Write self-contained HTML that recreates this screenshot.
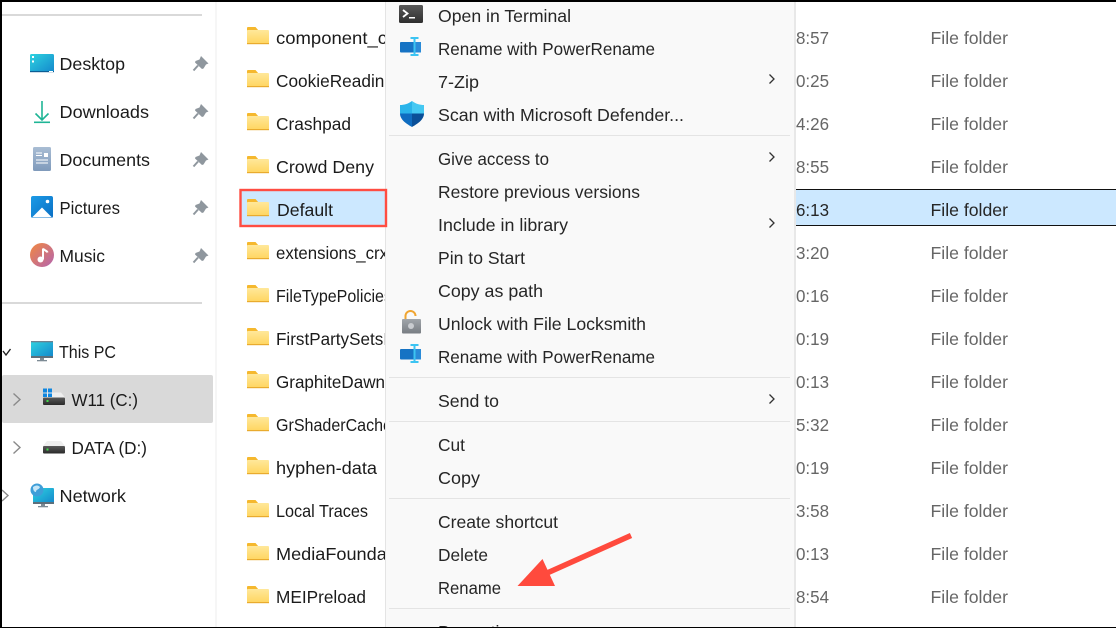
<!DOCTYPE html>
<html><head><meta charset="utf-8"><title>Explorer</title>
<style>
html,body{margin:0;padding:0;background:#fff;width:1116px;height:628px;overflow:hidden}
svg{display:block}
text{font-family:"Liberation Sans",sans-serif;font-size:17.5px}
.n{fill:#1b1b1b}.g{fill:#666}.m{fill:#262626}
</style></head><body>
<svg width="1116" height="628" viewBox="0 0 1116 628" xmlns="http://www.w3.org/2000/svg">
<defs>
<linearGradient id="fg" x1="0" y1="0" x2="0" y2="1"><stop offset="0" stop-color="#ffe89a"/><stop offset="1" stop-color="#ffd55f"/></linearGradient>
<linearGradient id="dk" x1="0" y1="0" x2="1" y2="1"><stop offset="0" stop-color="#2ed3e0"/><stop offset="1" stop-color="#1488cc"/></linearGradient>
<linearGradient id="doc" x1="0" y1="0" x2="0" y2="1"><stop offset="0" stop-color="#a9bdd4"/><stop offset="1" stop-color="#7f9abb"/></linearGradient>
<linearGradient id="pic" x1="0" y1="0" x2="1" y2="1"><stop offset="0" stop-color="#1c9be6"/><stop offset="1" stop-color="#0a6fc4"/></linearGradient>
<linearGradient id="mus" x1="0" y1="0" x2="1" y2="1"><stop offset="0" stop-color="#f2883f"/><stop offset="1" stop-color="#b364b0"/></linearGradient>
<linearGradient id="term" x1="0" y1="0" x2="0" y2="1"><stop offset="0" stop-color="#585858"/><stop offset="1" stop-color="#2f2f2f"/></linearGradient>
<linearGradient id="lk" x1="0" y1="0" x2="0" y2="1"><stop offset="0" stop-color="#a0a5aa"/><stop offset="1" stop-color="#787d83"/></linearGradient>
<linearGradient id="drv" x1="0" y1="0" x2="0" y2="1"><stop offset="0" stop-color="#5a5a5a"/><stop offset="1" stop-color="#2a2a2a"/></linearGradient>
<g id="folder">
<path d="M0 3a1 1 0 0 1 1-1h7.500l3 3.500H0z" fill="#f5b82e"/>
<rect x="0" y="5" width="22" height="14" rx="1" fill="url(#fg)"/>
<rect x="0" y="18" width="22" height="1.200" fill="#e9ab2e"/>
</g>
<g id="pin"><path d="M9 1 L16.500 8.500 L14 9.500 L11.500 13.500 L10 14 L3 7.500 L3.500 6 L7.500 4.500 Z" fill="#8f979e"/><path d="M6 10.500 L1.500 15.500" stroke="#8f979e" stroke-width="2"/></g>
<g id="pr"><rect x="0" y="5" width="21" height="10.500" rx="1" fill="#1673c4"/><rect x="14.500" y="5" width="6.500" height="10.500" fill="#2a8bd8"/><path d="M10.500 1h8M14.500 1v17M10.500 18h8" stroke="#3cc4f2" stroke-width="2" fill="none"/></g>
<g id="drive"><path d="M4 5.500 L18 5.500 L22 10.500 L0 10.500Z" fill="#efefef"/><rect x="0" y="10.500" width="22" height="7.500" rx="1" fill="url(#drv)"/><rect x="3.500" y="13" width="2" height="2" fill="#3fdc4a"/></g>
</defs>

<rect width="1116" height="628" fill="#fff"/>

<!-- sidebar -->
<rect x="2" y="14" width="200" height="2" fill="#d9d9d9"/>
<rect x="2" y="302" width="200" height="2" fill="#d9d9d9"/>
<rect x="215" y="0" width="2" height="628" fill="#f6f6f6"/>
<rect x="2" y="375" width="211" height="48" rx="2" fill="#d9d9d9"/>

<!-- Desktop -->
<rect x="30" y="54" width="24" height="18" rx="1.500" fill="url(#dk)"/>
<rect x="30" y="71" width="24" height="1.200" fill="#0c5e94"/>
<rect x="32" y="56" width="2" height="2" fill="#fff"/><rect x="32" y="60.500" width="2" height="2" fill="#fff"/>
<rect x="49" y="71" width="4" height="1" fill="#fff"/>
<text class="n" x="59.500" y="70" textLength="65.500" lengthAdjust="spacingAndGlyphs">Desktop</text>
<use href="#pin" x="192" y="55"/>
<!-- Downloads -->
<path d="M42 101V120M35.500 113.500L42 120L48.500 113.500" stroke="#1fb596" stroke-width="1.600" fill="none"/>
<rect x="34" y="121.500" width="16" height="1.600" fill="#1fb596"/>
<text class="n" x="59.500" y="118" textLength="89.500" lengthAdjust="spacingAndGlyphs">Downloads</text>
<use href="#pin" x="192" y="103"/>
<!-- Documents -->
<rect x="33" y="147" width="18" height="24" rx="1.500" fill="url(#doc)"/>
<path d="M36 153h6M36 155.500h6M36 160h12M36 163h12" stroke="#fff" stroke-width="1"/>
<rect x="44" y="153" width="4" height="4" fill="#fff"/>
<text class="n" x="59.500" y="166" textLength="90.500" lengthAdjust="spacingAndGlyphs">Documents</text>
<use href="#pin" x="192" y="151"/>
<!-- Pictures -->
<rect x="31" y="196" width="22" height="22" rx="2" fill="url(#pic)"/>
<path d="M32 217.500L42 207.500L52 217.500Z" fill="#fff"/>
<circle cx="47.500" cy="201.500" r="1.800" fill="#fff"/>
<text class="n" x="59.500" y="214" textLength="60.500" lengthAdjust="spacingAndGlyphs">Pictures</text>
<use href="#pin" x="192" y="199"/>
<!-- Music -->
<circle cx="42" cy="255" r="12" fill="url(#mus)"/>
<path d="M43 248.500V259.500" stroke="#fff" stroke-width="2"/><circle cx="40.500" cy="259.500" r="3" fill="#fff"/><path d="M43 248.500C44 250.500 47 250.500 47.500 252.500" stroke="#fff" stroke-width="2" fill="none"/>
<text class="n" x="59.500" y="262" textLength="45.500" lengthAdjust="spacingAndGlyphs">Music</text>
<use href="#pin" x="192" y="247"/>
<!-- This PC -->
<path d="M3 351L6 355L10.500 349" stroke="#222" stroke-width="1.400" fill="none"/>
<rect x="31" y="341" width="22" height="16" rx="1" fill="url(#dk)"/>
<rect x="31" y="341" width="22" height="1.300" fill="#6d8290"/><rect x="31" y="356" width="22" height="2" fill="#5d6f7b"/>
<rect x="40" y="358" width="4" height="2" fill="#7d8b95"/><rect x="37" y="360" width="10" height="1.300" fill="#7d8b95"/>
<text class="n" x="59" y="358" textLength="57" lengthAdjust="spacingAndGlyphs">This PC</text>
<!-- W11 -->
<path d="M13.500 393.500L20 399.500L13.500 405.500" stroke="#8a8a8a" stroke-width="1.400" fill="none"/>
<use href="#drive" x="43" y="387"/>
<path d="M43 388.500h4v4h-4zM48 388.500h4v4h-4zM43 393.500h4v3.500h-4zM48 393.500h4v3.500h-4z" fill="#0f86e0"/>
<text class="n" x="71.500" y="406" textLength="66.500" lengthAdjust="spacingAndGlyphs">W11 (C:)</text>
<!-- DATA -->
<path d="M13.500 441.500L20 447.500L13.500 453.500" stroke="#8a8a8a" stroke-width="1.400" fill="none"/>
<use href="#drive" x="43" y="435.500"/>
<text class="n" x="71.500" y="454" textLength="75.500" lengthAdjust="spacingAndGlyphs">DATA (D:)</text>
<!-- Network -->
<path d="M2 490L8 495.500L2 501" stroke="#8a8a8a" stroke-width="1.400" fill="none"/>
<rect x="33" y="488" width="21" height="15" rx="1" fill="url(#dk)"/><rect x="33" y="502" width="21" height="2" fill="#5d6f7b"/>
<rect x="41" y="504" width="4" height="2" fill="#7d8b95"/><rect x="38" y="506" width="10" height="1.300" fill="#7d8b95"/>
<circle cx="37" cy="490" r="6.500" fill="#3f9ed8"/><path d="M33 487c3-2 5-2 7 0-1 3-4 2-4 5-2 0-3-2-3-5z" fill="#c5e6f7"/>
<text class="n" x="59.500" y="502" textLength="66.500" lengthAdjust="spacingAndGlyphs">Network</text>

<!-- selected row -->
<rect x="795" y="189" width="321" height="37" fill="#cce8ff"/>
<rect x="795" y="189" width="321" height="1" fill="#111"/>
<rect x="795" y="225" width="321" height="1" fill="#111"/>
<rect x="241" y="190" width="146" height="36" fill="#cce8ff"/>

<!-- folders -->
<use href="#folder" x="247" y="25"/>
<use href="#folder" x="247" y="68"/>
<use href="#folder" x="247" y="111"/>
<use href="#folder" x="247" y="154"/>
<use href="#folder" x="247" y="197"/>
<use href="#folder" x="247" y="240"/>
<use href="#folder" x="247" y="283"/>
<use href="#folder" x="247" y="326"/>
<use href="#folder" x="247" y="369"/>
<use href="#folder" x="247" y="412"/>
<use href="#folder" x="247" y="455"/>
<use href="#folder" x="247" y="498"/>
<use href="#folder" x="247" y="541"/>
<use href="#folder" x="247" y="584"/>

<text class="n" x="276" y="44" textLength="111" lengthAdjust="spacingAndGlyphs">component_c</text>
<text class="n" x="276" y="87" textLength="118" lengthAdjust="spacingAndGlyphs">CookieReading</text>
<text class="n" x="276" y="130" textLength="75" lengthAdjust="spacingAndGlyphs">Crashpad</text>
<text class="n" x="276" y="173" textLength="98" lengthAdjust="spacingAndGlyphs">Crowd Deny</text>
<text class="n" x="277" y="216" textLength="56" lengthAdjust="spacingAndGlyphs">Default</text>
<text class="n" x="276" y="259" textLength="112" lengthAdjust="spacingAndGlyphs">extensions_crx</text>
<text class="n" x="276" y="302" textLength="116" lengthAdjust="spacingAndGlyphs">FileTypePolicies</text>
<text class="n" x="276" y="345" textLength="112" lengthAdjust="spacingAndGlyphs">FirstPartySetsI</text>
<text class="n" x="276" y="388" textLength="109" lengthAdjust="spacingAndGlyphs">GraphiteDawn</text>
<text class="n" x="276" y="431" textLength="116" lengthAdjust="spacingAndGlyphs">GrShaderCache</text>
<text class="n" x="276" y="474" textLength="101" lengthAdjust="spacingAndGlyphs">hyphen-data</text>
<text class="n" x="276" y="517" textLength="92" lengthAdjust="spacingAndGlyphs">Local Traces</text>
<text class="n" x="276" y="560" textLength="140" lengthAdjust="spacingAndGlyphs">MediaFoundation</text>
<text class="n" x="276" y="603" textLength="90" lengthAdjust="spacingAndGlyphs">MEIPreload</text>

<!-- times -->
<text class="g" x="796" y="44" textLength="33" lengthAdjust="spacingAndGlyphs">8:57</text>
<text class="g" x="796" y="87" textLength="33" lengthAdjust="spacingAndGlyphs">0:25</text>
<text class="g" x="796" y="130" textLength="33" lengthAdjust="spacingAndGlyphs">4:26</text>
<text class="g" x="796" y="173" textLength="33" lengthAdjust="spacingAndGlyphs">8:55</text>
<text class="m" x="796" y="216" textLength="33" lengthAdjust="spacingAndGlyphs">6:13</text>
<text class="g" x="796" y="259" textLength="33" lengthAdjust="spacingAndGlyphs">3:20</text>
<text class="g" x="796" y="302" textLength="33" lengthAdjust="spacingAndGlyphs">0:16</text>
<text class="g" x="796" y="345" textLength="33" lengthAdjust="spacingAndGlyphs">0:19</text>
<text class="g" x="796" y="388" textLength="33" lengthAdjust="spacingAndGlyphs">0:13</text>
<text class="g" x="796" y="431" textLength="33" lengthAdjust="spacingAndGlyphs">5:32</text>
<text class="g" x="796" y="474" textLength="33" lengthAdjust="spacingAndGlyphs">0:19</text>
<text class="g" x="796" y="517" textLength="33" lengthAdjust="spacingAndGlyphs">3:58</text>
<text class="g" x="796" y="560" textLength="33" lengthAdjust="spacingAndGlyphs">0:13</text>
<text class="g" x="796" y="603" textLength="33" lengthAdjust="spacingAndGlyphs">8:54</text>

<!-- type -->
<text class="g" x="930.500" y="44" textLength="77.500" lengthAdjust="spacingAndGlyphs">File folder</text>
<text class="g" x="930.500" y="87" textLength="77.500" lengthAdjust="spacingAndGlyphs">File folder</text>
<text class="g" x="930.500" y="130" textLength="77.500" lengthAdjust="spacingAndGlyphs">File folder</text>
<text class="g" x="930.500" y="173" textLength="77.500" lengthAdjust="spacingAndGlyphs">File folder</text>
<text class="m" x="930.500" y="216" textLength="77.500" lengthAdjust="spacingAndGlyphs">File folder</text>
<text class="g" x="930.500" y="259" textLength="77.500" lengthAdjust="spacingAndGlyphs">File folder</text>
<text class="g" x="930.500" y="302" textLength="77.500" lengthAdjust="spacingAndGlyphs">File folder</text>
<text class="g" x="930.500" y="345" textLength="77.500" lengthAdjust="spacingAndGlyphs">File folder</text>
<text class="g" x="930.500" y="388" textLength="77.500" lengthAdjust="spacingAndGlyphs">File folder</text>
<text class="g" x="930.500" y="431" textLength="77.500" lengthAdjust="spacingAndGlyphs">File folder</text>
<text class="g" x="930.500" y="474" textLength="77.500" lengthAdjust="spacingAndGlyphs">File folder</text>
<text class="g" x="930.500" y="517" textLength="77.500" lengthAdjust="spacingAndGlyphs">File folder</text>
<text class="g" x="930.500" y="560" textLength="77.500" lengthAdjust="spacingAndGlyphs">File folder</text>
<text class="g" x="930.500" y="603" textLength="77.500" lengthAdjust="spacingAndGlyphs">File folder</text>

<!-- context menu -->
<rect x="385" y="0" width="1" height="628" fill="#e4e4e4"/>
<rect x="794" y="0" width="2" height="628" fill="#e8e8e8"/>
<rect x="386" y="0" width="408" height="628" fill="#f9f9f9"/>
<rect x="389" y="135" width="401" height="1" fill="#e4e4e4"/>
<rect x="389" y="377" width="401" height="1" fill="#e4e4e4"/>
<rect x="389" y="421" width="401" height="1" fill="#e4e4e4"/>
<rect x="389" y="498" width="401" height="1" fill="#e4e4e4"/>
<rect x="389" y="608" width="401" height="1" fill="#e4e4e4"/>

<!-- red highlight box -->
<rect x="240.500" y="190" width="145.500" height="36" fill="none" stroke="#ff4d42" stroke-width="2.400"/>

<!-- menu icons -->
<rect x="399" y="5" width="24" height="18" rx="1.500" fill="url(#term)"/>
<path d="M403 10L407.500 13.500L403 17" stroke="#fff" stroke-width="1.800" fill="none"/>
<rect x="409" y="17" width="6" height="1.500" fill="#fff"/>
<use href="#pr" x="400" y="37"/>
<path d="M412 101C416 104 420 105 424 105V113.500H412Z" fill="#45c8f2"/>
<path d="M412 101C408 104 404 105 400 105V113.500H412Z" fill="#2ab4ea"/>
<path d="M400 113.500H412V127C407 124 400 120 400 113.500Z" fill="#0f6cc0"/>
<path d="M412 113.500H424C424 120 417 124 412 127Z" fill="#0a4f98"/>
<path d="M405.500 319v-3a5 5 0 0 1 10 0" stroke="#f0a530" stroke-width="2" fill="none"/>
<rect x="402" y="319" width="19" height="14.500" rx="1" fill="url(#lk)"/>
<circle cx="411" cy="326" r="3" fill="#c9ccd0"/>
<use href="#pr" x="400" y="344"/>

<!-- menu text -->
<text class="m" x="438" y="22" textLength="133" lengthAdjust="spacingAndGlyphs">Open in Terminal</text>
<text class="m" x="438" y="55" textLength="217" lengthAdjust="spacingAndGlyphs">Rename with PowerRename</text>
<text class="m" x="438" y="88" textLength="41" lengthAdjust="spacingAndGlyphs">7-Zip</text>
<text class="m" x="438" y="121" textLength="246" lengthAdjust="spacingAndGlyphs">Scan with Microsoft Defender...</text>
<text class="m" x="438" y="165" textLength="111" lengthAdjust="spacingAndGlyphs">Give access to</text>
<text class="m" x="438" y="198" textLength="202" lengthAdjust="spacingAndGlyphs">Restore previous versions</text>
<text class="m" x="438" y="231" textLength="130" lengthAdjust="spacingAndGlyphs">Include in library</text>
<text class="m" x="438" y="264" textLength="87" lengthAdjust="spacingAndGlyphs">Pin to Start</text>
<text class="m" x="438" y="297" textLength="105" lengthAdjust="spacingAndGlyphs">Copy as path</text>
<text class="m" x="438" y="330" textLength="208" lengthAdjust="spacingAndGlyphs">Unlock with File Locksmith</text>
<text class="m" x="438" y="363" textLength="217" lengthAdjust="spacingAndGlyphs">Rename with PowerRename</text>
<text class="m" x="438" y="407" textLength="61" lengthAdjust="spacingAndGlyphs">Send to</text>
<text class="m" x="438" y="451" textLength="27" lengthAdjust="spacingAndGlyphs">Cut</text>
<text class="m" x="438" y="484" textLength="42" lengthAdjust="spacingAndGlyphs">Copy</text>
<text class="m" x="438" y="528" textLength="120" lengthAdjust="spacingAndGlyphs">Create shortcut</text>
<text class="m" x="438" y="561" textLength="50" lengthAdjust="spacingAndGlyphs">Delete</text>
<text class="m" x="438" y="594" textLength="63" lengthAdjust="spacingAndGlyphs">Rename</text>
<text class="m" x="438" y="638" textLength="80" lengthAdjust="spacingAndGlyphs">Properties</text>

<!-- chevrons -->
<path d="M769.500 74.500L774 79L769.500 83.500" stroke="#333" stroke-width="1.300" fill="none"/>
<path d="M769.500 152.500L774 157L769.500 161.500" stroke="#333" stroke-width="1.300" fill="none"/>
<path d="M769.500 218.500L774 223L769.500 227.500" stroke="#333" stroke-width="1.300" fill="none"/>
<path d="M769.500 394.500L774 399L769.500 403.500" stroke="#333" stroke-width="1.300" fill="none"/>

<!-- arrow -->
<path d="M631 535.500L546 573.500" stroke="#ff4a3d" stroke-width="5.500" fill="none"/>
<path d="M517.500 586L542.500 559L555 586Z" fill="#ff4a3d"/>

<!-- screen edges -->
<rect x="0" y="0" width="1116" height="2" fill="#000"/>
<rect x="0" y="0" width="2" height="628" fill="#000"/>
<rect x="0" y="627" width="1116" height="1" fill="#000"/>
</svg>
</body></html>
